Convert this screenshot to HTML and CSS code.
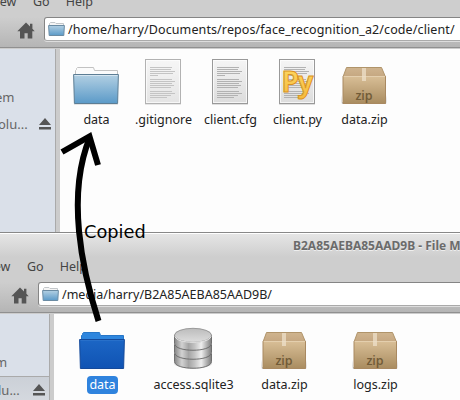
FILE: index.html
```html
<!DOCTYPE html>
<html lang="en">
<head>
<meta charset="utf-8">
<title>File Manager</title>
<link rel="stylesheet" href="styles.css">
</head>
<body>
<svg class="defs" aria-hidden="true">
  <defs>
    <linearGradient id="blue" x1="0" y1="0" x2="0" y2="1"><stop offset="0" stop-color="#b3d0e3"/><stop offset="1" stop-color="#5b9ac8"/></linearGradient>
    <linearGradient id="deep" x1="0" y1="0" x2="0" y2="1"><stop offset="0" stop-color="#1c66c5"/><stop offset="1" stop-color="#1053b3"/></linearGradient>
    <linearGradient id="paper" x1="0" y1="0" x2="0" y2="1"><stop offset="0" stop-color="#f5f5f5"/><stop offset="1" stop-color="#dcdcdc"/></linearGradient>
    <linearGradient id="box" x1="0" y1="0" x2="0" y2="1"><stop offset="0" stop-color="#d8be96"/><stop offset="1" stop-color="#a98c60"/></linearGradient>
    <linearGradient id="lid" x1="0" y1="0" x2="0" y2="1"><stop offset="0" stop-color="#cfb48f"/><stop offset="1" stop-color="#c5a781"/></linearGradient>
    <linearGradient id="metal"><stop offset="0" stop-color="#858585"/><stop offset=".2" stop-color="#d2d2d2"/><stop offset=".38" stop-color="#a4a4a4"/><stop offset=".55" stop-color="#c4c4c4"/><stop offset=".72" stop-color="#eeeeee"/><stop offset="1" stop-color="#7c7c7c"/></linearGradient>
    <linearGradient id="disk" x1="0" y1="0" x2="0" y2="1"><stop offset="0" stop-color="#bcbcbc"/><stop offset="1" stop-color="#dddddd"/></linearGradient>
    <linearGradient id="gold" x1="0" y1="0" x2="0" y2="1"><stop offset="0" stop-color="#ffdc68"/><stop offset="1" stop-color="#f5b93c"/></linearGradient>
    <symbol id="home" viewBox="0 0 18 17"><path d="M9 0.5 0.3 9.2H3V16.5H7.5V11.3H10.7V16.5H15.3V9.2H17.7L15.4 6.8V1.7H13V4.5Z" fill="#555"/></symbol>
    <symbol id="mini" viewBox="0 0 17 15"><path d="M1.5 4V1.5L2.5.5H7L8 1.5H15.5V4" fill="#f5f5f5" stroke="#c3c7ca"/><path d="M.6 3.5H16.4L15.8 13.5H1.2Z" fill="url(#blue)" stroke="#6a8ba3"/></symbol>
    <symbol id="eject" viewBox="0 0 12 12"><path d="M6 0 12 7H0ZM0 9H12V11.6H0Z" fill="#555"/></symbol>
    <symbol id="folder" viewBox="0 0 48 48"><path d="M2 47.8H46" stroke="#000" stroke-opacity=".15"/><path d="M3.5 18V13.5L4.5 12.5V11.5L5.5 10.5H21.5L22.5 13.5H45.5V18" fill="#fbfbfb" stroke="#c2c2c2"/><path d="M1.6 17.5H46.4L45.6 46.5H2.4Z" fill="url(#blue)" stroke="#5c7d94"/><path d="M2.5 18.5H45.5" stroke="#d5e5f0"/></symbol>
    <symbol id="folder-on" viewBox="0 0 48 48"><path d="M3.5 18V13.5L4.5 12.5V11.5L5.5 10.5H21.5L22.5 13.5H45.5V18" fill="#2e86de" stroke="#2676c8"/><path d="M1.6 17.5H46.4L45.6 46.5H2.4Z" fill="url(#deep)" stroke="#14499a"/><path d="M2.5 18.5H45.5" stroke="#2870ca"/></symbol>
    <symbol id="page" viewBox="0 0 48 48"><path d="M6 47.3H42" stroke="#000" stroke-opacity=".15"/><rect x="6.5" y="2.5" width="35" height="44" fill="url(#paper)" stroke="#999"/><rect x="7.5" y="3.5" width="33" height="42" fill="none" stroke="#fff" stroke-opacity=".7"/><path d="M11 10.5H33M11 12.5H32M11 14.5H36M11 16.5H34M11 18.5H19M11 22.5H33M11 24.5H36M11 26.5H33M11 28.5H35M11 30.5H32M11 34.5H33M11 36.5H36M11 38.5H32M11 40.5H28" stroke="#b2b2b2"/></symbol>
    <symbol id="python" viewBox="0 0 48 48"><use href="#page"/><text x="8.5" y="35" class="py">Py</text></symbol>
    <symbol id="zip" viewBox="0 0 48 48"><path d="M2 45V38Q1 45 2 47H46Q47 45 46 38V45" fill="#000" fill-opacity=".2"/><path d="M6.5 10.5H41.5L45.5 20H3Z" fill="url(#lid)" stroke="#b0946a"/><path d="M3 19.5H45.5V46.5H3Z" fill="url(#box)" stroke="#a98961"/><path d="M3.5 19.5H45" stroke="#e4cfae"/><path d="M22 11H26V24H22Z" fill="#eee0c9" fill-opacity=".75"/><text x="24" y="43" class="ziptext">zip</text></symbol>
    <symbol id="database" viewBox="0 0 48 48"><path d="M5.5 40Q24 52 42.5 40V43Q24 51 5.5 43Z" fill="#000" fill-opacity=".12"/>
      <g stroke="#666" stroke-width=".9"><path d="M5.5 32V39.5C5.5 48.5 42.5 48.5 42.5 39.5V32Z" fill="url(#metal)"/><path d="M5.5 23V30.5C5.5 39.5 42.5 39.5 42.5 30.5V23Z" fill="url(#metal)"/><path d="M5.5 13V21.5C5.5 30.5 42.5 30.5 42.5 21.5V13Z" fill="url(#metal)"/></g>
      <ellipse cx="24" cy="13.3" rx="18.5" ry="7" fill="url(#disk)" stroke="#8a8a8a" stroke-width=".8"/><path d="M6 14.5C8 22.3 40 22.3 42 14.5" fill="none" stroke="#eee" stroke-width=".9"/></symbol>
  </defs>
</svg>
<main class="desktop">
  <section class="window back">
    <nav class="menu"><span class="view">View</span><span>Go</span><span>Help</span></nav>
    <div class="toolbar"><svg class="home"><use href="#home"/></svg><div class="address"><svg class="mini"><use href="#mini"/></svg><span class="path">/home/harry/Documents/repos/face_recognition_a2/code/client/</span></div></div>
    <div class="content">
      <aside><div class="place"><span class="system">em</span></div><div class="place volume"><span>olu...</span><svg class="eject"><use href="#eject"/></svg></div></aside>
      <div class="files">
        <div class="file"><svg class="icon"><use href="#folder"/></svg><span>data</span></div>
        <div class="file"><svg class="icon faded"><use href="#page"/></svg><span>.gitignore</span></div>
        <div class="file"><svg class="icon"><use href="#page"/></svg><span>client.cfg</span></div>
        <div class="file"><svg class="icon"><use href="#python"/></svg><span>client.py</span></div>
        <div class="file"><svg class="icon"><use href="#zip"/></svg><span>data.zip</span></div>
      </div>
    </div>
  </section>
  <section class="window front">
    <header class="title"><span>B2A85AEBA85AAD9B - File Manager</span></header>
    <nav class="menu"><span class="view">View</span><span>Go</span><span>Help</span></nav>
    <div class="toolbar"><svg class="home"><use href="#home"/></svg><div class="address"><svg class="mini"><use href="#mini"/></svg><span class="path">/media/harry/B2A85AEBA85AAD9B/</span></div></div>
    <div class="content">
      <aside><div class="place"><span class="system">m</span></div><div class="place volume"><span>lu...</span><svg class="eject"><use href="#eject"/></svg></div></aside>
      <div class="files">
        <div class="file selected"><svg class="icon"><use href="#folder-on"/></svg><span>data</span></div>
        <div class="file"><svg class="icon"><use href="#database"/></svg><span>access.sqlite3</span></div>
        <div class="file"><svg class="icon"><use href="#zip"/></svg><span>data.zip</span></div>
        <div class="file"><svg class="icon"><use href="#zip"/></svg><span>logs.zip</span></div>
      </div>
    </div>
  </section>
  <svg class="note" viewBox="0 0 460 400"><path d="M98.5 321C82 270 66 195 90 137" /><path d="M62 152 89.5 136.5 98 165"/><text x="84" y="237.5">Copied</text></svg>
</main>
</body>
</html>
```
FILE: styles.css
```css
* { box-sizing: border-box; }
body { margin: 0; font: 12.5px/18px "Noto Sans", "Open Sans", sans-serif; color: #222; }
svg { display: block; flex: none; }
.defs { position: absolute; width: 0; height: 0; }
.desktop { position: relative; width: 460px; height: 400px; overflow: hidden; }
.window { display: flex; flex-direction: column; overflow: hidden; background: #cecece; }
.back { height: 232px; }
.front { height: 168px; border-top: 1px solid #888; }
.menu { display: flex; color: #444; white-space: nowrap; flex: none; gap: 16px; }
.back .menu { height: 17px; padding-left: 34px; }
.back .menu span { margin-top: -7px; }
.menu .view { width: 28px; margin-left: -45px; }
.front .menu { height: 25px; padding: 1px 0 0 28px; }
.title { flex: none; height: 24px; padding: 4px 0 0 293px; white-space: nowrap; font-weight: 700; font-size: 12px; color: #6b6b6b; background: linear-gradient(#fff 0 1px, #e5e5e5 1px, #cecece); text-shadow: 0 1px #eee; }
.toolbar { flex: none; display: flex; align-items: flex-start; height: 31px; background: linear-gradient(#cecece, #b5b5b5); border-bottom: 1px solid #909090; }
.home { width: 18px; height: 17px; margin: 5px 9px 0 17px; }
.front .home { margin-left: 11px; }
.address { display: flex; align-items: center; width: 430px; height: 24px; flex: none; border: 1px solid #858585; border-bottom-color: #aaa; border-radius: 3px; background: #fff; padding: 1px 0 0 3px; box-shadow: 0 1px #ddd; }
.mini { width: 17px; height: 15px; margin-right: 3px; }
.path { white-space: nowrap; padding-top: 1px; }
.back .path { letter-spacing: .11px; }
.content { display: flex; flex: 1; background: #fdfdfd; border-top: 1px solid #ccc; }
aside { width: 60px; flex: none; background: #dae0e9; border-right: 4px solid #ccc; box-shadow: inset -1px 0 #aaa; padding-top: 34px; color: #666; font-size: 13px; }
.front aside { width: 54px; padding-top: 33px; }
.place { height: 27px; display: flex; align-items: center; white-space: nowrap; }
.system { margin-left: -5px; }
.volume { justify-content: space-between; padding-right: 5px; }
.volume span { margin-left: -2px; }
.eject { width: 12px; height: 12px; }
.front .place:first-child { height: 29px; }
.front .volume { background: linear-gradient(#cbd0d7, #d5d9df); border-top: 1px solid #aaa; margin-right: 1px; padding-right: 4px; height: 26px; }
.files { display: flex; padding: 8px 0 0 3px; }
.file { width: 67px; flex: none; display: flex; flex-direction: column; align-items: center; white-space: nowrap; }
.front .file { width: 91px; }
.icon { width: 48px; height: 48px; margin: 0 1px 6px 0; }
.faded { opacity: .75; }
.file span { padding: 0 2px; border-radius: 4px; }
.selected span { background: #2f83de; color: #fff; }
.ziptext { font: 600 12.5px "Open Sans", sans-serif; fill: #715b37; text-anchor: middle; }
.py { font: 700 28px "Open Sans", sans-serif; fill: url(#gold); stroke: #d99322; stroke-width: 1; letter-spacing: -1.5px; }
.note { position: absolute; inset: 0; width: 460px; height: 400px; pointer-events: none; }
.note path { fill: none; stroke: #000; stroke-width: 6; }
.note text { font: 17.8px "DejaVu Sans", sans-serif; fill: #000; }
```
